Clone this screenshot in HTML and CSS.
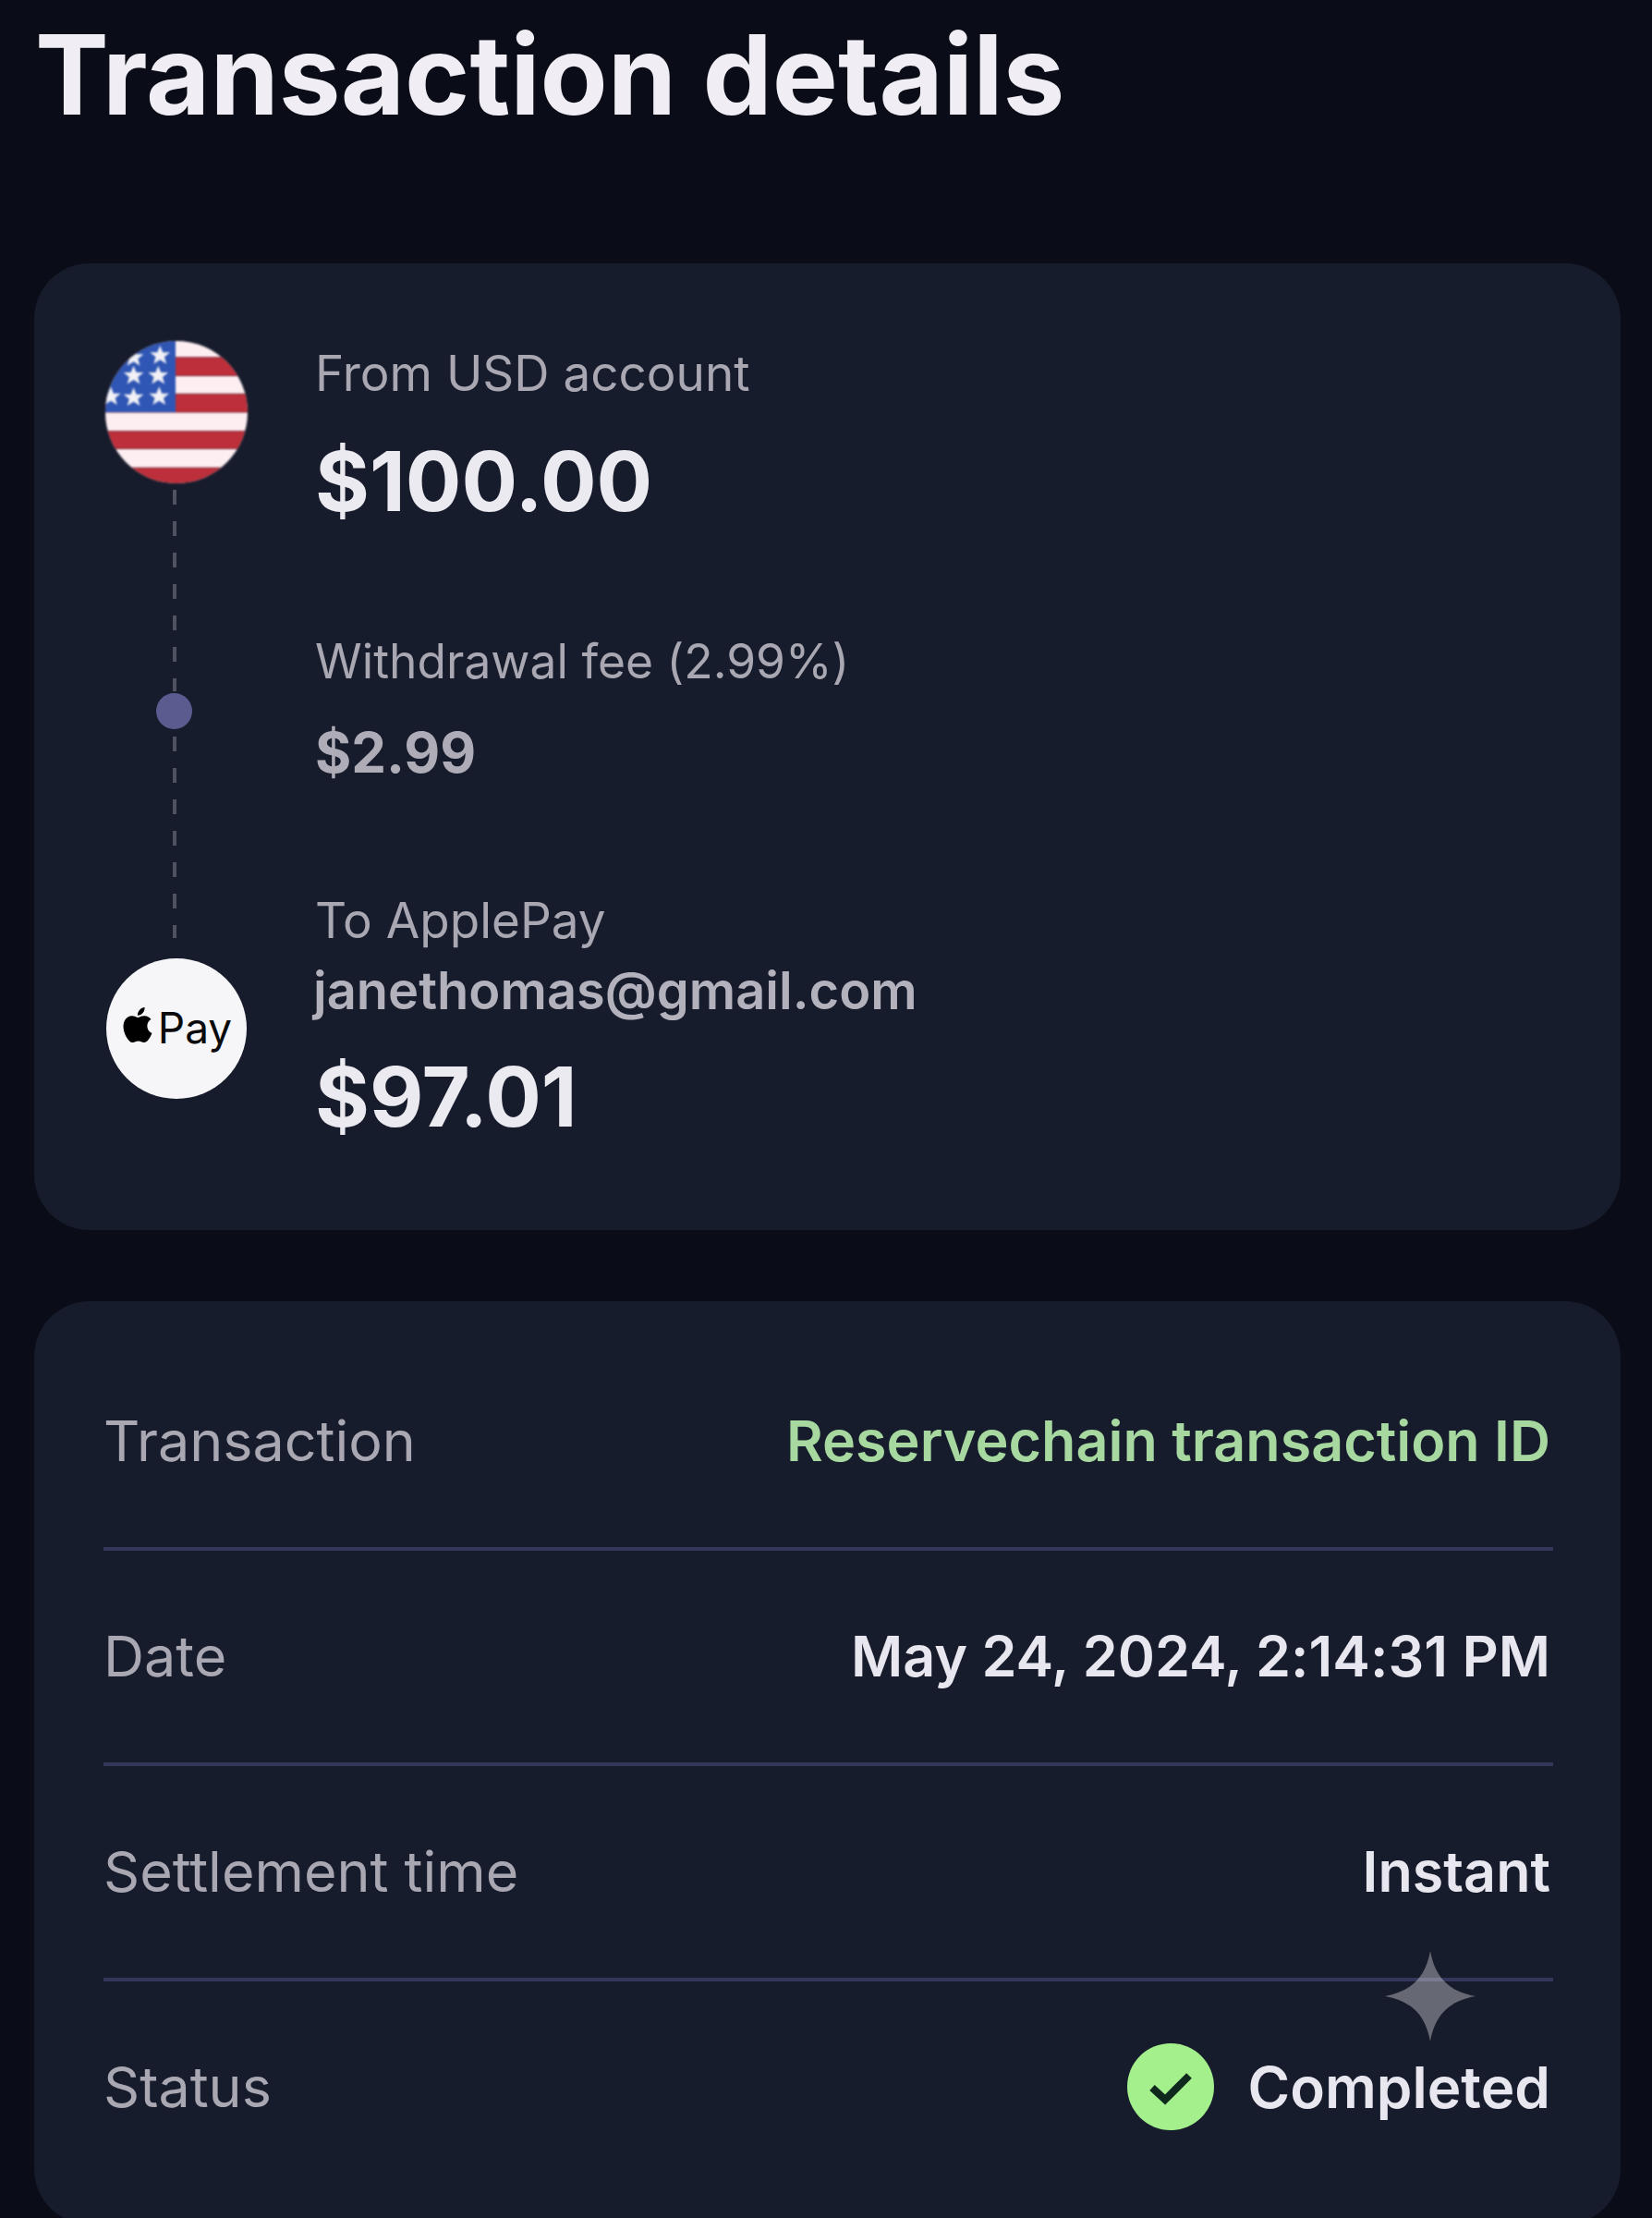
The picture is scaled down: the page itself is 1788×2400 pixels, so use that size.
FILE: index.html
```html
<!DOCTYPE html>
<html lang="en">
<head>
    <meta charset="UTF-8">
    <meta name="viewport" content="width=device-width, initial-scale=1.0">
    <title>Transaction details</title>
    <link rel="stylesheet" href="styles.css">
</head>
<body>
    <h1 class="page-title">Transaction details</h1>

    <section class="card flow-card">
        <div class="rail">
            <svg class="flag" viewBox="0 0 158 158" role="img" aria-label="United States flag">
                <defs>
                    <clipPath id="flagClip"><circle cx="79" cy="79" r="78"/></clipPath>
                    <polygon id="star" points="0,-11 3,-3.5 11,-3.5 4.8,1.5 7,9 0,4.6 -7,9 -4.8,1.5 -11,-3.5 -3,-3.5"/>
                </defs>
                <g clip-path="url(#flagClip)">
                    <rect width="158" height="158" fill="#fdeef2"/>
                    <rect y="19" width="158" height="20" fill="#bd2f3a" stroke="#7d2a38" stroke-width="1"/>
                    <rect y="59" width="158" height="20" fill="#bd2f3a" stroke="#7d2a38" stroke-width="1"/>
                    <rect y="100" width="158" height="19" fill="#bd2f3a" stroke="#7d2a38" stroke-width="1"/>
                    <rect y="140" width="158" height="18" fill="#bd2f3a" stroke="#7d2a38" stroke-width="1"/>
                    <rect width="78" height="79" fill="#2f56b4"/>
                    <g fill="#f1f1f6">
                        <use href="#star" x="32" y="19"/>
                        <use href="#star" x="61" y="17"/>
                        <use href="#star" x="32" y="39"/>
                        <use href="#star" x="59" y="39"/>
                        <use href="#star" x="7" y="62"/>
                        <use href="#star" x="32" y="63"/>
                        <use href="#star" x="60" y="62"/>
                    </g>
                </g>
            </svg>
            <span class="dash"></span>
            <span class="dot"></span>
            <span class="dash"></span>
            <div class="apple-pay">
                <svg class="apple-logo" viewBox="0 0 24 24" aria-hidden="true"><path d="M12.152 6.896c-.948 0-2.415-1.078-3.96-1.04-2.04.027-3.91 1.183-4.961 3.014-2.117 3.675-.546 9.103 1.519 12.09 1.013 1.454 2.208 3.09 3.792 3.039 1.52-.065 2.09-.987 3.935-.987 1.831 0 2.35.987 3.96.948 1.637-.026 2.676-1.48 3.676-2.948 1.156-1.688 1.636-3.325 1.662-3.415-.039-.013-3.182-1.221-3.22-4.857-.026-3.04 2.48-4.494 2.597-4.559-1.429-2.09-3.623-2.324-4.39-2.376-2-.156-3.675 1.09-4.61 1.09zM15.53 3.83c.843-1.012 1.4-2.427 1.245-3.83-1.207.052-2.662.805-3.532 1.818-.78.896-1.454 2.338-1.273 3.714 1.338.104 2.715-.688 3.559-1.701"/></svg>
                <span>Pay</span>
            </div>
        </div>
        <div class="steps">
            <div class="step">
                <p class="step-label">From USD account</p>
                <p class="step-amount">$100.00</p>
            </div>
            <div class="step fee">
                <p class="step-label">Withdrawal fee (2.99%)</p>
                <p class="step-fee">$2.99</p>
            </div>
            <div class="step to">
                <p class="step-label">To ApplePay</p>
                <p class="step-email">janethomas@gmail.com</p>
                <p class="step-amount">$97.01</p>
            </div>
        </div>
    </section>

    <section class="card info-card">
        <div class="info-row">
            <span class="info-label">Transaction</span>
            <span class="info-value link">Reservechain transaction ID</span>
        </div>
        <div class="info-row">
            <span class="info-label">Date</span>
            <span class="info-value">May 24, 2024, 2:14:31 PM</span>
        </div>
        <div class="info-row">
            <span class="info-label">Settlement time</span>
            <span class="info-value">Instant</span>
        </div>
        <div class="info-row last">
            <span class="info-label">Status</span>
            <span class="info-value status">
                <svg class="check" viewBox="0 0 96 96" aria-hidden="true">
                    <circle cx="48" cy="48" r="47" fill="#a4f08c"/>
                    <path d="M28 49 L42 62 L68 36" fill="none" stroke="#10291f" stroke-width="8"/>
                </svg>
                Completed
            </span>
        </div>
        <svg class="sparkle" viewBox="0 0 96 96" aria-hidden="true">
            <path d="M48 0 C53 28 68 43 96 48 C68 53 53 68 48 96 C43 68 28 53 0 48 C28 43 43 28 48 0 Z"/>
        </svg>
    </section>
</body>
</html>
```

FILE: styles.css
```css
html, body { height: 2400px; overflow: hidden; }
body { margin: 0; padding: 0 34px 0 37px; background: #0a0d17; color: #e8e6ee; font-family: Inter, "Open Sans", sans-serif; font-variant-ligatures: none; }
p { margin: 0; }

.page-title { margin: 0; padding: 0 0 0 1px; height: 285px; font-size: 119.5px; line-height: 162px; font-weight: 700; color: #f0eef4; }

.card { background: #171c2c; border-radius: 60px; }

/* top card: rail on the left, amounts on the right */
.flow-card { display: flex; height: 1046px; box-sizing: border-box; padding: 83px 76px 0; }
.rail { width: 155px; height: 821px; display: flex; flex-direction: column; align-items: center; margin-right: 73px; }
.flag { width: 156px; height: 156px; flex: none; filter: blur(1px); }
.dash { flex: 1; width: 4px; margin: 6px 4px 0 0; background: repeating-linear-gradient(to bottom, #50525f 0 16px, transparent 16px 34px); }
.dot { flex: none; width: 39px; height: 39px; margin: 2px 4px 2px 0; border-radius: 50%; background: #5a5c90; }
.apple-pay { flex: none; width: 152px; height: 152px; box-sizing: border-box; padding-bottom: 3px; margin-top: 22px; border-radius: 50%; background: #f6f5f8; color: #0a0a0c; display: flex; align-items: center; justify-content: center; gap: 3px; font-size: 46px; }
.apple-logo { width: 38px; height: 40px; margin-bottom: 6px; }

.steps { padding-top: 6px; }
.step-label { font-size: 53px; line-height: 60px; color: #a9a7b2; }
.step-amount { font-size: 90px; line-height: 100px; margin-top: 37px; font-weight: 700; color: #eceaf1; }
.step-fee { font-size: 60px; line-height: 70px; margin-top: 34px; font-weight: 700; color: #aeacb6; }
.step-email { font-size: 56px; line-height: 60px; margin-top: 16px; margin-left: -2px; font-weight: 600; color: #b3b1bc; }
.fee { margin-top: 114px; }
.fee .step-label { font-size: 51.5px; }
.to { margin-top: 117px; }
.to .step-amount { margin-top: 35px; }

/* bottom card: label / value rows */
.info-card { position: relative; margin-top: 77px; padding: 37px 76px 33px 75px; }
.info-row { display: flex; box-sizing: border-box; justify-content: space-between; align-items: center; height: 233px; padding: 0 3px 2px 0; margin-right: -3px; border-bottom: 4px solid #33375a; }
.info-row.last { height: 230px; border-bottom: 0; }
.info-label { font-size: 61px; color: #a9a7b2; }
.info-value { font-size: 61px; font-weight: 600; color: #e8e6ee; }
.link { color: #a6d8a0; }
.status { display: flex; align-items: center; gap: 36px; font-size: 62px; }
.check { width: 96px; height: 96px; }
.sparkle { position: absolute; left: 1462px; top: 703px; width: 98px; height: 98px; fill: rgba(255, 255, 255, 0.34); }
```
